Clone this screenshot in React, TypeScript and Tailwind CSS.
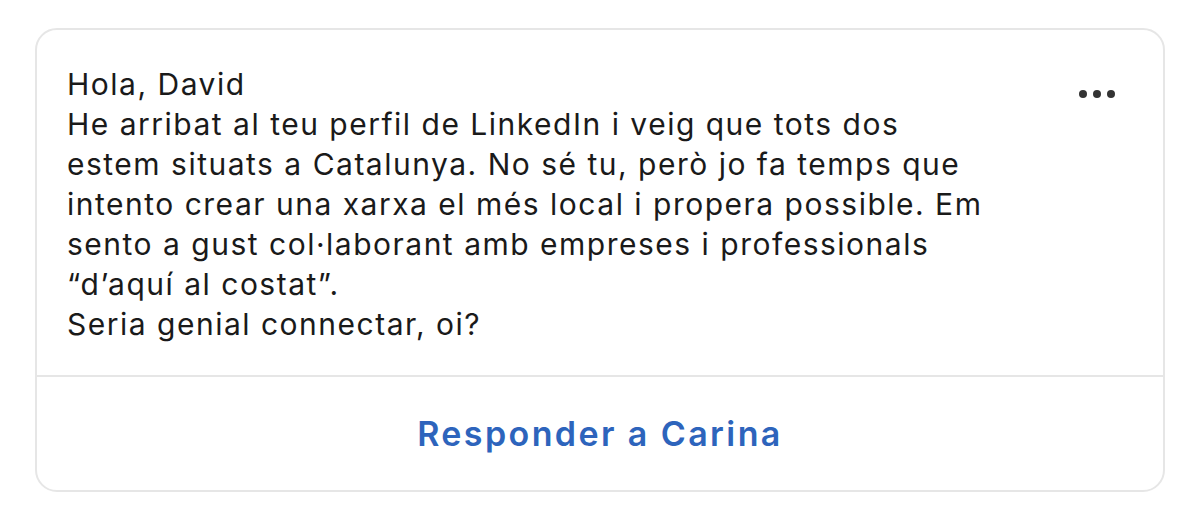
import React from 'react';

const lines = [
    'Hola, David',
    'He arribat al teu perfil de LinkedIn i veig que tots dos',
    'estem situats a Catalunya. No sé tu, però jo fa temps que',
    'intento crear una xarxa el més local i propera possible. Em',
    'sento a gust col·laborant amb empreses i professionals',
    '“d’aquí al costat”.',
    'Seria genial connectar, oi?',
];

const MoreDots: React.FC = () => (
    <div className="self-start flex items-center gap-[6px] mt-[26px]">
        <span className="block w-[8px] h-[8px] rounded-full bg-[#333333]" />
        <span className="block w-[8px] h-[8px] rounded-full bg-[#333333]" />
        <span className="block w-[8px] h-[8px] rounded-full bg-[#333333]" />
    </div>
);

export default function App() {
    return (
        <div className="w-[1200px] h-[520px] bg-white pt-[28px] pl-[35px]" style={{ fontFamily: 'Inter, "Noto Sans", sans-serif' }}>
            <div className="w-[1130px] h-[464px] border-2 border-[#e6e6e6] rounded-[22px] flex flex-col overflow-hidden">
                <div className="flex justify-between pt-[34px] pl-[30px] pr-[48px] pb-[31px] border-b-2 border-[#e6e6e6]">
                    <div className="text-[30px] leading-[40px] text-[#1a1a1a] tracking-[1.5px]">
                        {lines.map((l) => (
                            <div key={l}>{l}</div>
                        ))}
                    </div>
                    <MoreDots />
                </div>
                <div className="flex-1 flex items-center justify-center">
                    <button className="text-[34px] font-semibold text-[#2d64bc] tracking-[2.4px]">
                        Responder a Carina
                    </button>
                </div>
            </div>
        </div>
    );
}
